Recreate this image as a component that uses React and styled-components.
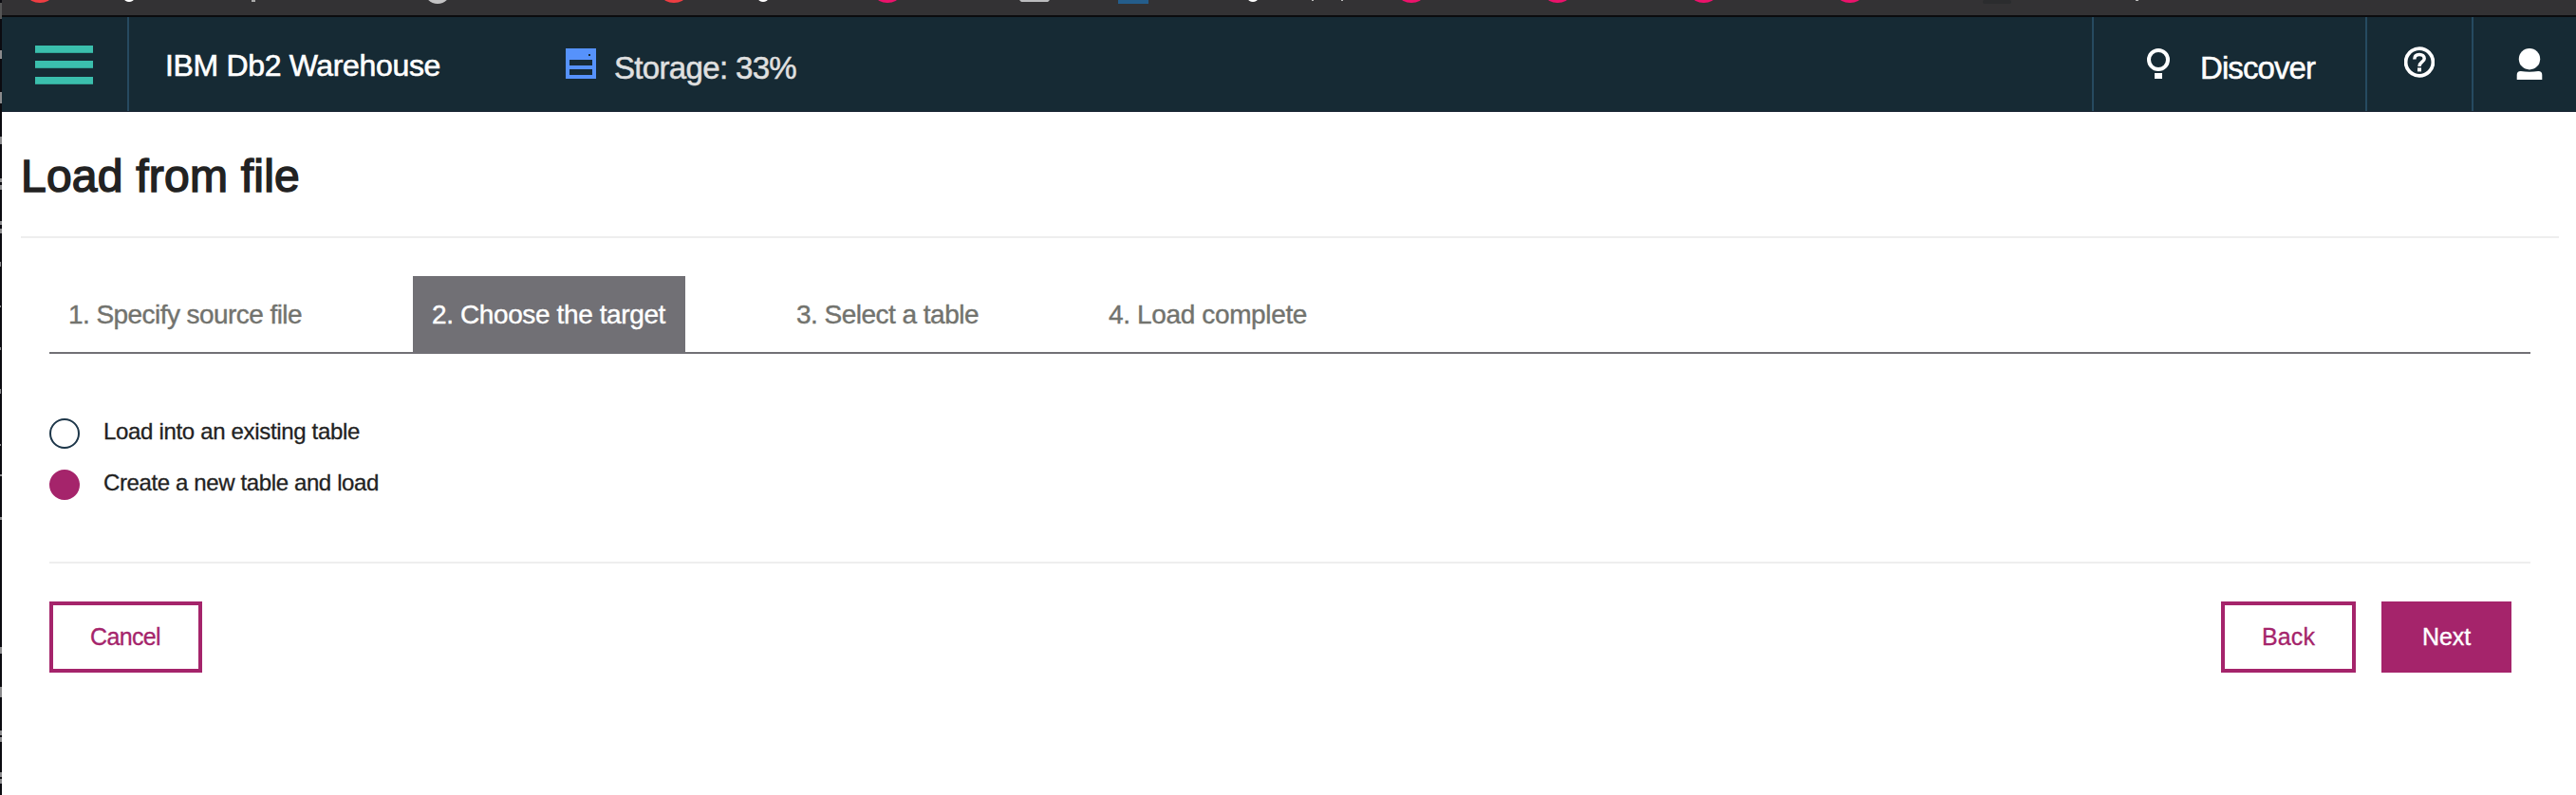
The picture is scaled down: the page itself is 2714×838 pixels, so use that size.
import React, { useLayoutEffect, useRef } from "react";
import styled, { createGlobalStyle } from "styled-components";

const Global = createGlobalStyle`
  * { box-sizing: border-box; }
  body { margin: 0; background: #fff; font-family: "Liberation Sans", Arial, sans-serif; }
`;
const magenta = "#a5246b";

const Page = styled.div`
  display: flex;
  width: 2714px;
  height: 838px;
  overflow: hidden;
`;
const Edge = styled.svg`
  flex: 0 0 2px;
  width: 2px;
  height: 838px;
  background: #0b0b10;
`;
const Main = styled.div`
  flex: 1;
  min-width: 0;
`;
const BrowserStrip = styled.div`
  height: 18px;
  background: #333234;
  border-bottom: 2px solid #0b0c0e;
  svg { display: block; }
`;
const Header = styled.header`
  display: flex;
  height: 100px;
  background: #162a34;
  border-bottom: 1px solid #172331;
  color: #fff;
`;
const MenuButton = styled.div`
  width: 134px;
  border-right: 2px solid #264a60;
  padding: 30px 0 0 35px;
`;
const Bar = styled.div`
  width: 61px;
  height: 8px;
  background: #3bbfad;
  border-bottom: 1px solid #31a395;
  margin-bottom: ${(p) => p.$gap || 0}px;
`;
const Icon = styled.svg`
  display: block;
  flex: none;
`;
const Text = styled.span`
  display: block;
  white-space: nowrap;
  font-size: ${(p) => p.$size}px;
  line-height: ${(p) => p.$size}px;
  color: ${(p) => p.$color || "inherit"};
  -webkit-text-stroke: ${(p) => p.$stroke || 0}px currentColor;
`;
const Brand = styled.div`
  width: 460px;
  padding: 35px 0 0 38px;
`;
const Storage = styled.div`
  display: flex;
  flex: 1;
  gap: 19px;
  padding-top: 33px;
  ${Text} { padding-top: 4px; }
`;
const Action = styled.div`
  display: flex;
  width: ${(p) => p.$w}px;
  border-left: 2px solid #264a60;
  padding: ${(p) => p.$pad};
  gap: 32px;
  ${Text} { padding-top: 4px; }
`;
const TitleBar = styled.div`
  height: 133px;
  margin: 0 18px 0 20px;
  padding-top: 44px;
  border-bottom: 2px solid #eee;
`;
const Steps = styled.nav`
  display: flex;
  height: 82px;
  margin: 40px 48px 0 50px;
  border-bottom: 2px solid #717075;
`;
const Step = styled.div`
  width: ${(p) => p.$w}px;
  margin-right: ${(p) => p.$gap}px;
  padding: 27px 0 0 20px;
  background: ${(p) => (p.$active ? "#717075" : "transparent")};
  color: ${(p) => (p.$active ? "#fff" : "#72736e")};
`;
const Options = styled.div`
  display: flex;
  flex-direction: column;
  gap: 22px;
  height: 221px;
  margin: 0 48px 0 50px;
  padding-top: 68px;
  border-bottom: 2px solid #eee;
`;
const Option = styled.label`
  display: flex;
  height: 32px;
  gap: 25px;
  color: #222;
  ${Text} { padding-top: 2px; }
`;
const Radio = styled.span`
  width: 32px;
  height: 32px;
  border-radius: 50%;
  border: 2px solid ${(p) => (p.$on ? magenta : "#1d3649")};
  background: ${(p) => (p.$on ? magenta : "#fff")};
`;
const Footer = styled.footer`
  display: flex;
  gap: 27px;
  margin: 40px 68px 0 50px;
`;
const Spacer = styled.div`
  flex: 1;
`;
const Button = styled.button`
  width: ${(p) => p.$w}px;
  height: 75px;
  padding: 0 0 0 39px;
  border: 4px solid ${magenta};
  border-radius: 0;
  background: ${(p) => (p.$primary ? magenta : "#fff")};
  color: ${(p) => (p.$primary ? "#fff" : magenta)};
  font-family: inherit;
  text-align: left;
`;

/* Spaces the letters so that a label takes exactly its given width. */
function Label({ w, children, ...rest }) {
  const ref = useRef(null);
  useLayoutEffect(() => {
    const el = ref.current;
    el.style.letterSpacing = "0px";
    el.style.width = "max-content";
    const natural = el.getBoundingClientRect().width;
    el.style.letterSpacing = `${(w - natural) / children.length}px`;
  }, [w, children]);
  return <Text ref={ref} {...rest}>{children}</Text>;
}

const pinkDots = [934, 1486, 1640, 1794, 1948];

export default function App() {
  return (
    <>
      <Global />
      <Page>
        <Edge viewBox="0 0 2 838">
          <path d="M0 3h2v17h-2z" fill="#555" />
          <path d="M0 53h2v9h-2zM0 97h2v12h-2zM0 144h2v8h-2zM0 188h2v4h-2zM0 195h2v5h-2zM0 233h2v4h-2zM0 241h2v5h-2zM0 276h1v5h-1zM0 322h1v2h-1zM0 366h1v3h-1zM0 410h1v5h-1zM0 468h1v2h-1zM0 500h2v2h-2zM0 545h2v3h-2zM0 682h2v7h-2zM0 724h2v11h-2zM0 770h2v5h-2zM0 777h2v5h-2zM0 814h2v5h-2zM0 821h2v5h-2z" fill="#8b8b8d" />
        </Edge>
        <Main>
          <BrowserStrip>
            <Icon width="2712" height="16" viewBox="2 0 2712 16">
              {[42, 710].map((x) => <ellipse key={x} cx={x} cy="-4" rx="12" ry="7" fill="#ef3d42" />)}
              {pinkDots.map((x) => <ellipse key={x} cx={x + 1} cy="-4" rx="12" ry="7" fill="#ec126b" />)}
              {[136, 804, 1320].map((x) => <ellipse key={x} cx={x} cy="-1" rx="5" ry="3" fill="#fff" />)}
              <circle cx="461" cy="-10" r="14" fill="#c3c3c4" />
              <rect x="265" width="4" height="2" fill="#aaa" />
              <path d="M1074 0h32l-2 2h-28z" fill="#bbbcbe" />
              <rect x="1178" width="32" height="4" fill="#245d8b" />
              <path d="M1382 0h2v1h-2zM1413 0h2v1h-2zM2250 0h3v1h-3z" fill="#bbb" />
              <rect x="2089" width="30" height="4" rx="2" fill="#2b2c2e" />
            </Icon>
          </BrowserStrip>
          <Header>
            <MenuButton><Bar $gap={8} /><Bar $gap={9} /><Bar /></MenuButton>
            <Brand><Label w={290} $size={32} $stroke={0.6}>IBM Db2 Warehouse</Label></Brand>
            <Storage>
              <Icon width="32" height="32" viewBox="0 0 32 32">
                <path fillRule="evenodd" d="M0 0h32v32H0zM4 12v6h24v-6zM4 22v6h24v-6zM24 6v2h2v-2z" fill="#5692fb" />
              </Icon>
              <Label w={192} $size={33} $color="#e0e0e0" $stroke={0.5}>Storage: 33%</Label>
            </Storage>
            <Action $w={288} $pad="33px 0 0 56px">
              <Icon width="24" height="32" viewBox="0 0 24 32">
                <circle cx="12" cy="12" r="10" fill="none" stroke="#fff" strokeWidth="4" />
                <rect x="8" y="26" width="8" height="6" fill="#fff" />
              </Icon>
              <Label w={121} $size={33} $stroke={0.5}>Discover</Label>
            </Action>
            <Action $w={112} $pad="31px 0 0 39px">
              <Icon width="32" height="34" viewBox="0 0 32 34">
                <circle cx="16" cy="16.5" r="14.4" fill="none" stroke="#fff" strokeWidth="3.8" />
                <path d="M10.8 13.4c0-3.4 2-4.9 5.2-4.9s5.2 1.7 5.2 4.2c0 3.5-5.2 3.7-5.2 8.3" fill="none" stroke="#fff" strokeWidth="3.5" />
                <rect x="14" y="22.4" width="4" height="4" fill="#fff" />
              </Icon>
            </Action>
            <Action $w={110} $pad="33px 0 0 45px">
              <Icon width="28" height="34" viewBox="0 0 28 34">
                <circle cx="14" cy="11.2" r="11.2" fill="#fff" />
                <path d="M.7 33v-5q0-4 4-4q9.300 1.400 18.600 0q4 0 4 4v5z" fill="#fff" />
              </Icon>
            </Action>
          </Header>
          <TitleBar><Label w={294} $size={48} $color="#222" $stroke={1.5}>Load from file</Label></TitleBar>
          <Steps>
            <Step $w={287} $gap={96}><Label w={246} $size={28} $stroke={0.4}>1. Specify source file</Label></Step>
            <Step $w={287} $gap={97} $active><Label w={246} $size={28} $stroke={0.4}>2. Choose the target</Label></Step>
            <Step $w={232} $gap={97}><Label w={192} $size={28} $stroke={0.4}>3. Select a table</Label></Step>
            <Step $w={250} $gap={0}><Label w={209} $size={28} $stroke={0.4}>4. Load complete</Label></Step>
          </Steps>
          <Options>
            <Option><Radio /><Label w={270} $size={24} $stroke={0.3}>Load into an existing table</Label></Option>
            <Option><Radio $on /><Label w={290} $size={24} $stroke={0.3}>Create a new table and load</Label></Option>
          </Options>
          <Footer>
            <Button $w={161}><Label w={74} $size={25} $stroke={0.3}>Cancel</Label></Button>
            <Spacer />
            <Button $w={142}><Label w={56} $size={25} $stroke={0.3}>Back</Label></Button>
            <Button $w={137} $primary><Label w={51} $size={25} $stroke={0.4}>Next</Label></Button>
          </Footer>
        </Main>
      </Page>
    </>
  );
}
